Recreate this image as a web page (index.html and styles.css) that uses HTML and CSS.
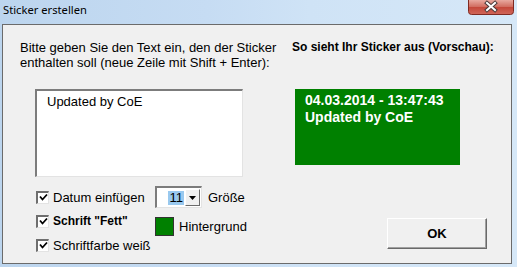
FILE: index.html
```html
<!DOCTYPE html>
<html>
<head>
<meta charset="utf-8">
<link rel="stylesheet" href="styles.css">
</head>
<body>
<div class="window">
  <div class="titlebar">
    <span class="title">Sticker erstellen</span>
    <div class="close">
      <svg width="46" height="15" viewBox="0 0 46 15">
        <defs>
          <linearGradient id="cg" x1="0" y1="0" x2="0" y2="1">
            <stop offset="0" stop-color="#e8a99f"/>
            <stop offset="0.45" stop-color="#d26f62"/>
            <stop offset="0.5" stop-color="#c4483a"/>
            <stop offset="1" stop-color="#d0675a"/>
          </linearGradient>
        </defs>
        <path d="M0.5 0 V11.5 Q0.5 14.5 3.5 14.5 H42.5 Q45.5 14.5 45.5 11.5 V0" fill="url(#cg)" stroke="#7f2a22" stroke-width="1"/>
        <path d="M19 3 L27 10 M27 3 L19 10" stroke="#4a3a3a" stroke-width="4" stroke-linecap="square"/>
        <path d="M19 3 L27 10 M27 3 L19 10" stroke="#ffffff" stroke-width="2" stroke-linecap="square"/>
      </svg>
    </div>
  </div>
  <div class="client">
    <div class="col-left">
      <p class="instr">Bitte geben Sie den Text ein, den der Sticker<br>enthalten soll (neue Zeile mit Shift + Enter):</p>
      <div class="textbox">Updated by CoE</div>
      <div class="options">
        <div class="opt">
          <span class="check"><svg width="9" height="9" viewBox="0 0 9 9"><path d="M1 3.5 L3.5 6.5 L8 1.5" fill="none" stroke="#000" stroke-width="1.8"/></svg></span>
          <span class="lbl">Datum einfügen</span>
        </div>
        <div class="opt2">
          <div class="combo">
            <span class="combo-val"><span class="sel">11</span></span>
            <span class="combo-btn"><svg width="7" height="4" viewBox="0 0 7 4"><path d="M0 0 H7 L3.5 4 Z" fill="#000"/></svg></span>
          </div>
          <span class="lbl">Größe</span>
        </div>
        <div class="opt">
          <span class="check"><svg width="9" height="9" viewBox="0 0 9 9"><path d="M1 3.5 L3.5 6.5 L8 1.5" fill="none" stroke="#000" stroke-width="1.8"/></svg></span>
          <span class="lbl bold">Schrift "Fett"</span>
        </div>
        <div class="opt2 low">
          <span class="swatch"></span>
          <span class="lbl">Hintergrund</span>
        </div>
        <div class="opt">
          <span class="check"><svg width="9" height="9" viewBox="0 0 9 9"><path d="M1 3.5 L3.5 6.5 L8 1.5" fill="none" stroke="#000" stroke-width="1.8"/></svg></span>
          <span class="lbl">Schriftfarbe weiß</span>
        </div>
      </div>
    </div>
    <div class="col-right">
      <p class="heading">So sieht Ihr Sticker aus (Vorschau):</p>
      <div class="preview">04.03.2014 - 13:47:43<br>Updated by CoE</div>
      <button class="ok">OK</button>
    </div>
  </div>
</div>
</body>
</html>
```
FILE: styles.css
```css
html, body {
  margin: 0;
  padding: 0;
}
body {
  width: 517px;
  height: 267px;
  overflow: hidden;
  font-family: "Liberation Sans", Arial, sans-serif;
  font-size: 13px;
  color: #000;
}
.window {
  width: 517px;
  height: 267px;
  background: linear-gradient(90deg, #bcd5ee 0%, #c6dcf3 40%, #cfe3f6 60%, #d6e8f8 100%);
  display: flex;
  flex-direction: column;
}
.titlebar {
  height: 24px;
  display: flex;
  align-items: flex-start;
}
.title {
  font-family: "Noto Sans", "DejaVu Sans", sans-serif;
  font-size: 11.2px;
  line-height: 20px;
  padding-left: 3px;
  color: #000;
}
.close {
  margin-left: auto;
  margin-right: 3px;
  height: 15px;
}
.close svg {
  display: block;
}
.client {
  margin-left: 2px;
  width: 508px;
  height: 238px;
  border: 1px solid #6b6b6b;
  background: #f0f0f0;
  display: flex;
  padding: 0;
}
.col-left {
  width: 272px;
  padding-left: 17px;
  padding-top: 15px;
}
.col-right {
  padding-top: 15px;
  display: flex;
  flex-direction: column;
  align-items: flex-start;
}
.instr {
  margin: 0;
  line-height: 15px;
}
.heading {
  margin: 0;
  line-height: 15px;
  font-weight: bold;
  font-size: 12px;
}
.textbox {
  margin: 19px 0 0 15px;
  background: #fff;
  border-top: 2px solid #7c7c7c;
  border-left: 2px solid #7c7c7c;
  border-right: 1px solid #e3e3e3;
  border-bottom: 1px solid #e3e3e3;
  box-sizing: content-box;
  padding: 3px 0 0 10px;
  width: 195px;
  height: 82px;
  line-height: 15px;
  color: #000;
}
.options {
  margin: 8px 0 0 16px;
  display: grid;
  grid-template-columns: 119px auto;
  grid-auto-rows: 24px;
}
.opt, .opt2 {
  display: flex;
  align-items: center;
}
.opt2.low {
  align-items: flex-start;
  padding-top: 8px;
}
.opt2.low .lbl {
  line-height: 19px;
}
.check {
  width: 13px;
  height: 13px;
  box-sizing: border-box;
  background: #fff;
  border-top: 2px solid #6e6e6e;
  border-left: 2px solid #6e6e6e;
  border-right: 1px solid #e3e3e3;
  border-bottom: 1px solid #e3e3e3;
  display: flex;
  align-items: center;
  justify-content: center;
  margin-right: 4px;
}
.check svg {
  display: block;
}
.lbl.bold {
  font-weight: bold;
  font-size: 12px;
}
.combo {
  width: 47px;
  height: 22px;
  box-sizing: border-box;
  background: #fff;
  border-top: 2px solid #7c7c7c;
  border-left: 2px solid #7c7c7c;
  border-right: 1px solid #e3e3e3;
  border-bottom: 1px solid #e3e3e3;
  display: flex;
  align-items: center;
  margin-right: 6px;
}
.combo-val {
  flex: 1;
  display: flex;
  justify-content: flex-end;
  padding-right: 1px;
}
.sel {
  background: #99c9ef;
  line-height: 14px;
  padding: 0 1px 0 2px;
}
.combo-btn {
  width: 15px;
  height: 17px;
  box-sizing: border-box;
  background: #f0f0f0;
  border-top: 1px solid #fff;
  border-left: 1px solid #fff;
  border-right: 1px solid #6b6b6b;
  border-bottom: 1px solid #6b6b6b;
  display: flex;
  align-items: center;
  justify-content: center;
  margin-right: 1px;
}
.combo-btn svg {
  display: block;
}
.swatch {
  width: 19px;
  height: 19px;
  box-sizing: border-box;
  background: #008000;
  border: 1px solid #333;
  margin-right: 5px;
}
.preview {
  margin: 34px 0 0 3px;
  width: 165px;
  height: 76px;
  box-sizing: border-box;
  background: #008000;
  color: #fff;
  font-weight: bold;
  font-size: 14px;
  line-height: 17px;
  padding: 3px 0 0 10px;
}
.ok {
  margin: 53px 0 0 95px;
  width: 100px;
  height: 31px;
  box-sizing: border-box;
  background: #f0f0f0;
  font-family: "Liberation Sans", Arial, sans-serif;
  font-size: 13px;
  font-weight: bold;
  color: #000;
  border-top: 1px solid #fff;
  border-left: 1px solid #fff;
  border-right: 1px solid #696969;
  border-bottom: 1px solid #696969;
  box-shadow: inset -1px -1px 0 #a0a0a0;
  padding: 0;
}
```
